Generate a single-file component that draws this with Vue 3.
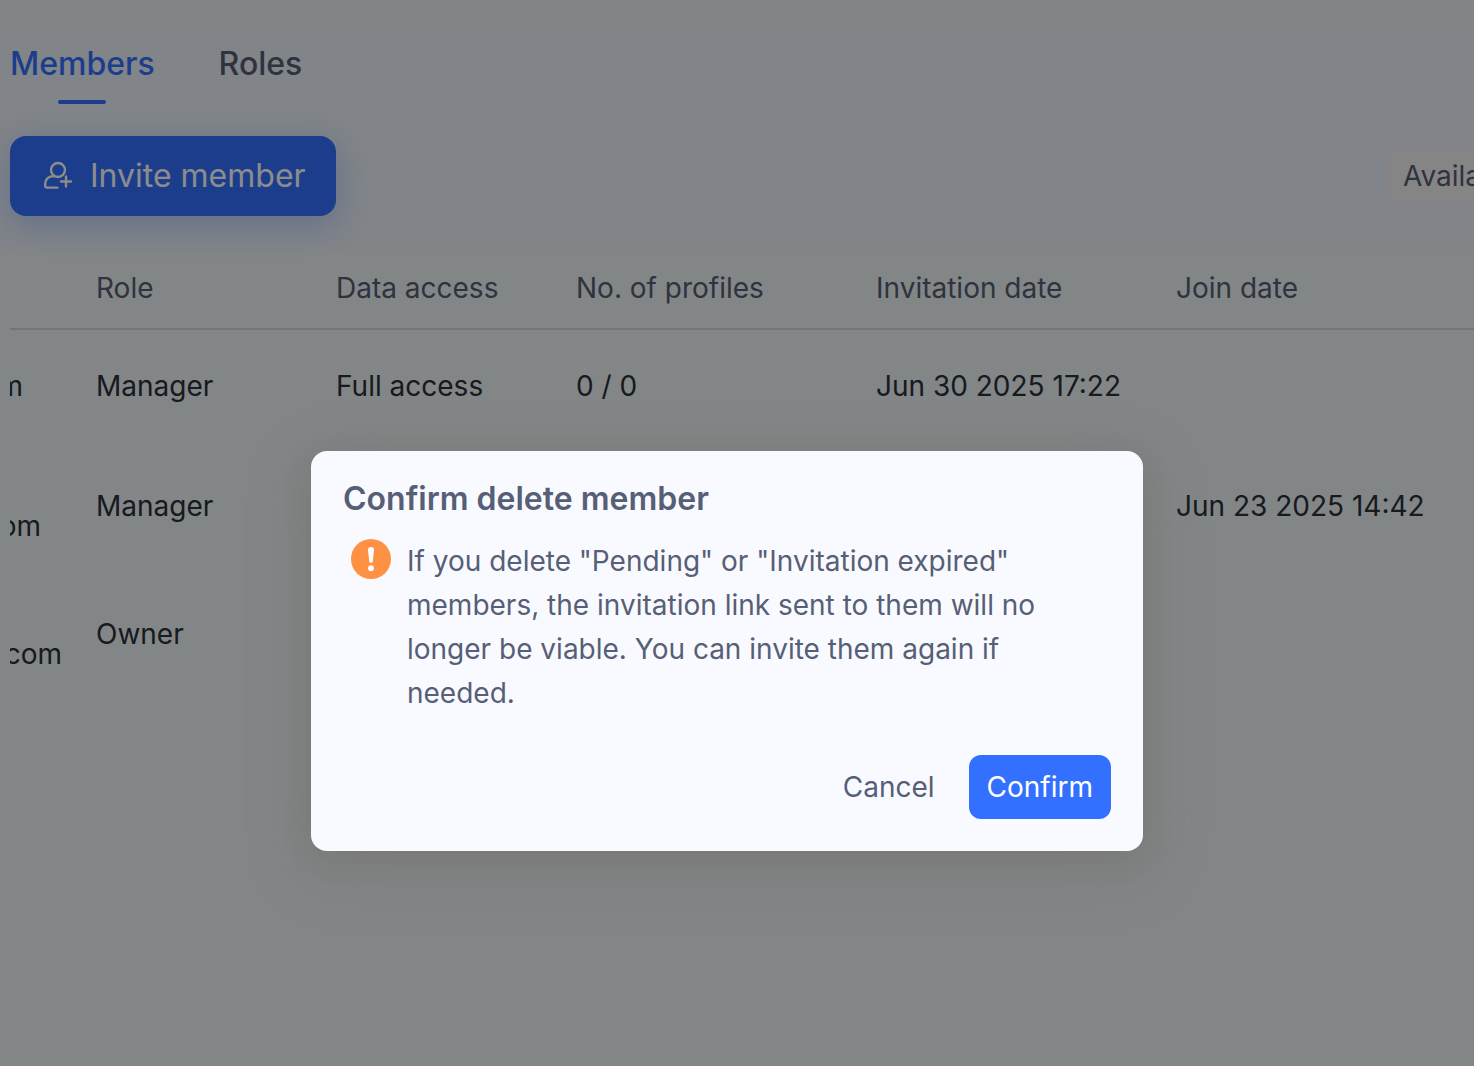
<!-- Team members page with the delete confirmation dialog open on top -->

<template>
  <div class="page">
    <main class="content">
      <nav class="tabs">
        <a
          v-for="tab in tabs"
          :key="tab"
          href="#"
          class="tab"
          :class="{ active: tab === activeTab }"
          @click.prevent="activeTab = tab"
        >{{ tab }}</a>
      </nav>

      <div class="toolbar">
        <button type="button" class="invite">
          <svg class="invite-icon" viewBox="0 0 32 32" aria-hidden="true">
            <circle cx="16" cy="10" r="7" />
            <path d="M12 16.2 H10.500 C6.500 16.200 3.200 19.500 3.200 23.500 V25.500 C3.200 26.700 4.100 27.600 5.300 27.600 H15.500" />
            <path d="M24 16.500 V26.500 M19 21.500 H29" />
          </svg>
          Invite member
        </button>
        <div class="filter">
          <select v-model="status" class="filter-select" aria-label="Status">
            <option>Available</option>
          </select>
        </div>
      </div>

      <table class="members">
        <colgroup>
          <col class="col-email">
          <col class="col-narrow">
          <col class="col-narrow">
          <col class="col-wide">
          <col class="col-wide">
          <col>
        </colgroup>
        <thead>
          <tr>
            <th></th>
            <th>Role</th>
            <th>Data access</th>
            <th>No. of profiles</th>
            <th>Invitation date</th>
            <th>Join date</th>
          </tr>
        </thead>
        <tbody>
          <tr v-for="(member, i) in members" :key="i" :class="{ tall: member.named }">
            <td class="email-cell">
              <span class="email" :style="{ width: member.visible + 'px' }">{{ member.email }}</span>
            </td>
            <td>{{ member.role }}</td>
            <td>{{ member.access }}</td>
            <td>{{ member.profiles }}</td>
            <td>{{ member.invited }}</td>
            <td>{{ member.joined }}</td>
          </tr>
        </tbody>
      </table>
    </main>

    <div v-if="dialogOpen" class="overlay">
      <section class="dialog" role="dialog" aria-modal="true" aria-labelledby="dialog-title">
        <h2 id="dialog-title" class="dialog-title">Confirm delete member</h2>
        <div class="dialog-body">
          <svg class="warning" viewBox="0 0 40 40" aria-hidden="true">
            <circle cx="20" cy="20" r="20" fill="#ff9145" />
            <path d="M17 10.700 C17 9 18.200 8 20 8 C21.800 8 23 9 23 10.700 L21.800 22.300 C21.600 24.500 18.400 24.500 18.200 22.300 Z" fill="#fff" />
            <circle cx="20" cy="29.200" r="2.900" fill="#fff" />
          </svg>
          <p class="message">
            If you delete "Pending" or "Invitation expired" members, the invitation
            link sent to them will no longer be viable. You can invite them again if needed.
          </p>
        </div>
        <div class="actions">
          <button type="button" class="btn" @click="dialogOpen = false">Cancel</button>
          <button type="button" class="btn primary" @click="dialogOpen = false">Confirm</button>
        </div>
      </section>
    </div>
  </div>
</template>

<script setup>
import { ref } from 'vue'

const tabs = ['Members', 'Roles']
const activeTab = ref('Members')
const status = ref('Available')
const dialogOpen = ref(true)

// The email column is scrolled under the left edge, so only the last
// `visible` pixels of each address show.
const members = [
  { email: 'm', visible: 13, role: 'Manager', access: 'Full access', profiles: '0 / 0', invited: 'Jun 30 2025 17:22', joined: '' },
  { email: 'om', visible: 31, named: true, role: 'Manager', access: '', profiles: '', invited: '', joined: 'Jun 23 2025 14:42' },
  { email: 'com', visible: 52, named: true, role: 'Owner', access: '', profiles: '', invited: '', joined: '' },
]
</script>

<style>
body {
  margin: 0;
}
</style>

<style scoped>
.page {
  position: relative;
  min-height: 100vh;
  overflow: hidden;
  background: linear-gradient(180deg, #ecf2f8 0, #ebf0f7 240px, #edf4f5 256px);
  color: #2b303b;
  font-family: Inter, "Liberation Sans", sans-serif;
  font-size: 28px;
  line-height: 40px;
}

button,
select {
  font: inherit;
  border: none;
}

.content {
  padding: 44px 0 0 10px;
}

.tabs {
  display: flex;
  gap: 64px;
}

.tab {
  display: flex;
  flex-direction: column;
  align-items: center;
  gap: 16px;
  color: #565d73;
  font-size: 32px;
  font-weight: 500;
  text-decoration: none;
}

.tab::after {
  content: "";
  width: 48px;
  height: 4px;
  border-radius: 2px;
}

.tab.active {
  color: #3370ff;
}

.tab.active::after {
  background: #3370ff;
}

.toolbar {
  display: flex;
  align-items: center;
  justify-content: space-between;
  padding: 32px 0;
}

.invite {
  display: flex;
  align-items: center;
  gap: 16px;
  height: 80px;
  padding: 0 30px 0 32px;
  border-radius: 16px;
  background: #3370ff;
  box-shadow: 0 8px 32px rgba(51, 112, 255, 0.3);
  color: #fff;
  font-size: 32px;
}

.invite-icon {
  width: 32px;
  height: 32px;
  fill: none;
  stroke: #fff;
  stroke-width: 2.4;
  stroke-linecap: round;
  stroke-linejoin: round;
}

.filter {
  width: 87px;
  overflow: hidden;
  border-radius: 8px 0 0 8px;
}

.filter-select {
  display: block;
  appearance: none;
  width: 240px;
  height: 56px;
  padding: 0 16px;
  background: #f3f3f3;
  color: #565d73;
}

.members {
  width: 100%;
  table-layout: fixed;
  border-collapse: separate;
  border-spacing: 0;
}

.col-email {
  width: 70px;
}

.col-narrow {
  width: 240px;
}

.col-wide {
  width: 300px;
}

.members th {
  height: 80px;
  padding: 0 16px;
  border-bottom: 2px solid #d0d3de;
  color: #565d73;
  font-weight: 400;
  text-align: left;
}

.members td {
  height: 112px;
  padding: 0 16px;
  white-space: nowrap;
}

.members .tall td {
  height: 128px;
}

.members .email-cell {
  padding: 0;
}

/* rows with a name above the address */
.members .tall .email-cell {
  height: 88px;
  padding-top: 40px;
}

.email {
  display: flex;
  justify-content: flex-end;
  overflow: hidden;
}

.overlay {
  position: absolute;
  inset: 0;
  display: flex;
  justify-content: center;
  align-items: flex-start;
  padding: 451px 20px 0 0;
  background: rgba(0, 0, 0, 0.45);
}

.dialog {
  box-sizing: border-box;
  width: 832px;
  padding: 28px 32px 32px;
  border-radius: 16px;
  background: #f9faff;
  box-shadow: 0 16px 64px rgba(120, 105, 105, 0.3), 0 8px 32px rgba(60, 40, 40, 0.1);
  color: #565f76;
}

.dialog-title {
  margin: 0 0 20px;
  font-size: 32px;
  font-weight: 600;
}

.dialog-body {
  display: flex;
  align-items: flex-start;
  gap: 16px;
  padding: 0 40px 0 8px;
}

.warning {
  flex: none;
  width: 40px;
  height: 40px;
}

.message {
  margin: 0;
  line-height: 44px;
}

.actions {
  display: flex;
  justify-content: flex-end;
  gap: 16px;
  margin-top: 40px;
}

.btn {
  height: 64px;
  padding: 0 18px;
  border-radius: 12px;
  background: transparent;
  color: #565f76;
}

.btn.primary {
  background: #3370ff;
  color: #fff;
}
</style>
